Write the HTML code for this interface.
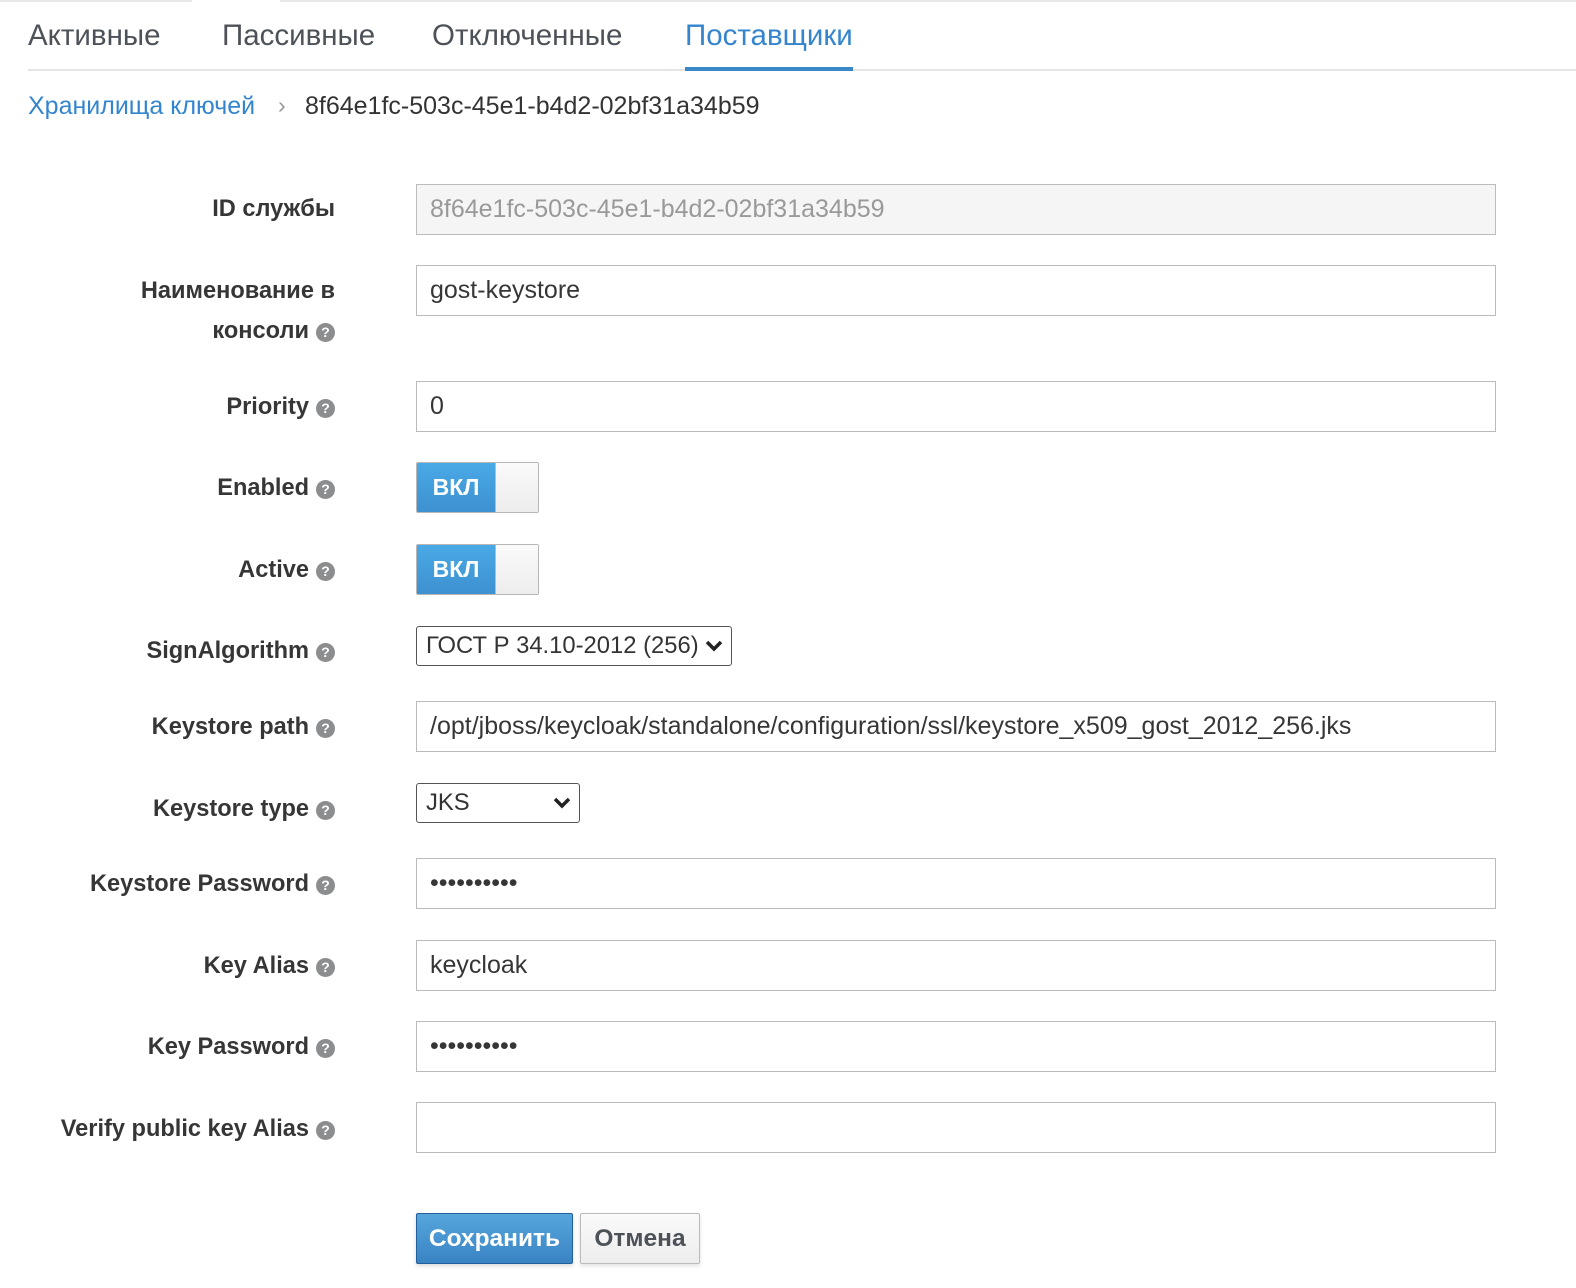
<!DOCTYPE html>
<html><head><meta charset="utf-8"><style>
body{margin:0;width:1576px;height:1288px;background:#fff;font-family:"Liberation Sans",sans-serif;color:#363636;position:relative;overflow:hidden}
.a{position:absolute}
.tab{position:absolute;top:19px;font-size:29.5px;color:#4d5258}
.lbl{position:absolute;right:1241px;font-size:23.6px;font-weight:bold;color:#363636;text-align:right;white-space:nowrap}
.q{display:inline-block;width:19px;height:19px;border-radius:50%;background:#8b8d8f;color:#fff;font-size:14px;line-height:19px;text-align:center;vertical-align:1px;margin-left:7px}
.inp{position:absolute;left:416px;width:1065px;height:49px;border:1px solid #bbb;font-size:25px;line-height:49px;padding-left:13px;box-sizing:content-box;color:#363636}
.tog{position:absolute;left:416px;width:121px;height:49px;border:1px solid #b7b7b7;border-radius:2px;overflow:hidden}
.tog .on{position:absolute;left:0;top:0;width:78px;height:49px;background:linear-gradient(#4aa9e6,#3d91d0);color:#fff;font-weight:bold;font-size:23px;text-align:center;line-height:49px}
.tog .off{position:absolute;left:78px;top:0;right:0;height:49px;background:linear-gradient(#fafafa,#ededed);border-left:1px solid #bbb}
.sel{position:absolute;left:416px;border:1px solid #555;border-radius:3px;font-size:23.8px;padding-left:9px;box-sizing:border-box;color:#333;white-space:nowrap}
.chev{position:absolute;right:8px;top:50%;margin-top:-7px}
</style></head><body>
<div class="a" style="left:0;top:0;width:192px;height:2px;background:#e6e6e6"></div>
<div class="a" style="left:280px;top:0;width:1296px;height:2px;background:#e6e6e6"></div>
<div class="tab" style="left:28px">Активные</div>
<div class="tab" style="left:222px">Пассивные</div>
<div class="tab" style="left:432px">Отключенные</div>
<div class="tab" style="left:685px;color:#3485cd">Поставщики</div>
<div class="a" style="left:28px;top:69px;width:1548px;height:2px;background:#e5e5e5"></div>
<div class="a" style="left:685px;top:67px;width:168px;height:4px;background:#3a87c8"></div>
<div class="a" style="left:28px;top:92px;font-size:25px;color:#3485cd">Хранилища ключей</div>
<div class="a" style="left:278px;top:92px;font-size:23px;color:#999">›</div>
<div class="a" style="left:305px;top:92px;font-size:25px;color:#333">8f64e1fc-503c-45e1-b4d2-02bf31a34b59</div>

<div class="lbl" style="top:196px">ID службы</div>
<div class="inp" style="top:184px;background:#f5f5f5;color:#999">8f64e1fc-503c-45e1-b4d2-02bf31a34b59</div>
<div class="lbl" style="top:271px;line-height:40px">Наименование в<br>консоли<span class="q">?</span></div>
<div class="inp" style="top:265px">gost-keystore</div>
<div class="lbl" style="top:394px">Priority<span class="q">?</span></div>
<div class="inp" style="top:381px">0</div>
<div class="lbl" style="top:475px">Enabled<span class="q">?</span></div>
<div class="tog" style="top:462px"><div class="on">ВКЛ</div><div class="off"></div></div>
<div class="lbl" style="top:557px">Active<span class="q">?</span></div>
<div class="tog" style="top:544px"><div class="on">ВКЛ</div><div class="off"></div></div>
<div class="lbl" style="top:638px">SignAlgorithm<span class="q">?</span></div>
<div class="sel" style="top:626px;width:316px;height:40px;line-height:38px">ГОСТ Р 34.10-2012 (256)<svg class="chev" width="18" height="14" viewBox="0 0 18 14"><path d="M2 3l7 7 7-7" stroke="#222" stroke-width="3.5" fill="none"/></svg></div>
<div class="lbl" style="top:714px">Keystore path<span class="q">?</span></div>
<div class="inp" style="top:701px">/opt/jboss/keycloak/standalone/configuration/ssl/keystore_x509_gost_2012_256.jks</div>
<div class="lbl" style="top:796px">Keystore type<span class="q">?</span></div>
<div class="sel" style="top:783px;width:164px;height:40px;line-height:38px">JKS<svg class="chev" width="18" height="14" viewBox="0 0 18 14"><path d="M2 3l7 7 7-7" stroke="#222" stroke-width="3.5" fill="none"/></svg></div>
<div class="lbl" style="top:871px">Keystore Password<span class="q">?</span></div>
<div class="inp" style="top:858px">••••••••••</div>
<div class="lbl" style="top:953px">Key Alias<span class="q">?</span></div>
<div class="inp" style="top:940px">keycloak</div>
<div class="lbl" style="top:1034px">Key Password<span class="q">?</span></div>
<div class="inp" style="top:1021px">••••••••••</div>
<div class="lbl" style="top:1116px">Verify public key Alias<span class="q">?</span></div>
<div class="inp" style="top:1102px"></div>

<div class="a" style="left:416px;top:1213px;width:155px;height:49px;border:1px solid #22609c;border-radius:2px;background:linear-gradient(#56a6dc,#3a83c4);color:#fff;font-weight:bold;font-size:24.5px;text-align:center;line-height:49px;box-shadow:0 2px 4px rgba(0,0,0,.15)">Сохранить</div>
<div class="a" style="left:580px;top:1213px;width:118px;height:49px;border:1px solid #bbb;border-radius:2px;background:linear-gradient(#fafafa,#ededed);color:#4d5258;font-weight:bold;font-size:24.5px;text-align:center;line-height:49px;box-shadow:0 2px 4px rgba(0,0,0,.12)">Отмена</div>
</body></html>
